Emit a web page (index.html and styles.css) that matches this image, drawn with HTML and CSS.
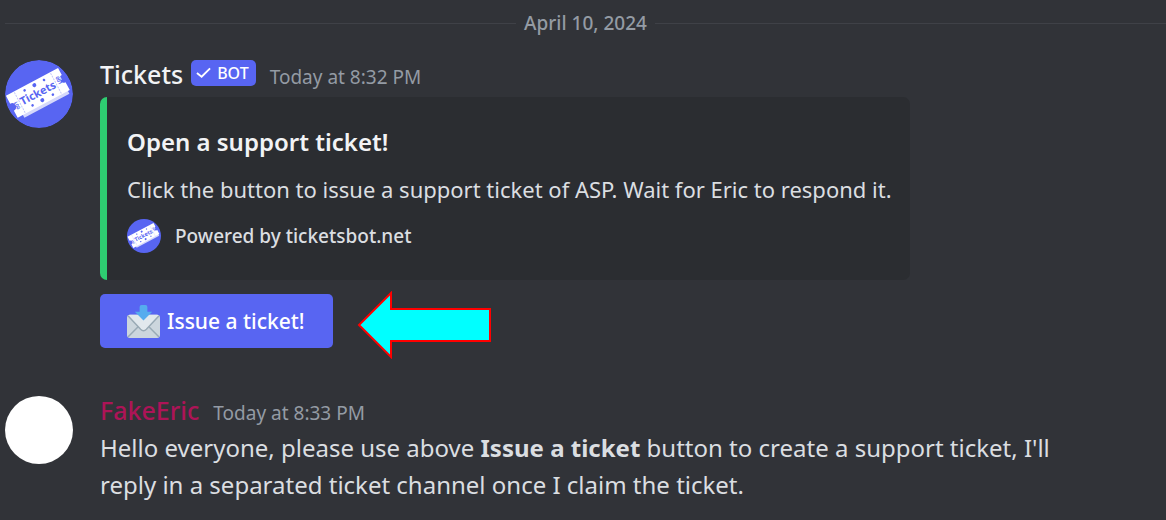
FILE: index.html
```html
<!DOCTYPE html>
<html lang="en">
<head>
<meta charset="utf-8">
<meta name="viewport" content="width=device-width, initial-scale=1">
<title>Support tickets</title>
<link rel="stylesheet" href="styles.css">
</head>
<body>
<svg class="defs" aria-hidden="true">
  <symbol id="ticket-logo" viewBox="0 0 68 68">
    <circle cx="34" cy="34" r="34" fill="#5865f2"/>
    <g transform="rotate(-28 34 34)">
      <path d="M10 26H61V32A3 3 0 0 0 61 38V48H10Z" fill="#d5d8fb"/>
      <path d="M4 20H63V28A4 4 0 0 0 63 36V45H4V37A4 4 0 0 0 4 29Z" fill="#fff"/>
      <path d="M13 21V44M54 21V44" stroke="#c3c8fa" stroke-dasharray="2 1"/>
      <g fill="#5865f2">
        <text x="33.500" y="36.500" text-anchor="middle" class="logo-word">Tickets</text>
        <text transform="translate(11 38) rotate(-90)" class="logo-num">001</text>
        <text transform="translate(56 27) rotate(90)" class="logo-num">001</text>
        <circle cx="23" cy="24" r="1.300"/><circle cx="34" cy="24" r="2"/><circle cx="45" cy="24" r="1.300"/>
        <circle cx="23" cy="41" r="1.300"/><circle cx="34" cy="41" r="2"/><circle cx="46" cy="41" r="1.300"/>
      </g>
    </g>
  </symbol>
</svg>
<main class="chat">
  <div class="divider"><time datetime="2024-04-10">April 10, 2024</time></div>

  <article class="message">
    <svg class="avatar" role="img" aria-label="Tickets avatar"><use href="#ticket-logo"/></svg>
    <div class="body">
      <header class="header">
        <span class="author">Tickets</span>
        <span class="badge"><svg class="check" viewBox="0 0 16 12" aria-hidden="true"><path d="M1 6L6 10L15 1"/></svg>BOT</span>
        <time class="stamp">Today at 8:32 PM</time>
      </header>
      <section class="embed">
        <h2 class="title">Open a support ticket!</h2>
        <p class="description">Click the button to issue a support ticket of ASP. Wait for Eric to respond it.</p>
        <footer class="footer"><svg class="footer-icon" aria-hidden="true"><use href="#ticket-logo"/></svg>Powered by ticketsbot.net</footer>
      </section>
      <div class="actions">
        <button class="issue" type="button">
          <svg class="mail" viewBox="0 0 34 34" aria-hidden="true">
            <rect x="0" y="10" width="34" height="24" rx="3" fill="#ccd6dd"/>
            <path d="M1 33L12 22M33 33L22 22" stroke="#99aab5" stroke-width="1.500"/>
            <path d="M1 11Q2 10 3 10H31Q32 10 33 11L20 25Q17 28 14 25Z" fill="#e1e8ed"/>
            <path d="M1 11L14 25Q17 28 20 25L33 11" fill="none" stroke="#99aab5" stroke-width="1.500"/>
            <path d="M13 2Q13 0 15 0H19Q21 0 21 2V7H26L17 16L8 7H13Z" fill="#55acee"/>
          </svg>
          Issue a ticket!
        </button>
        <svg class="arrow" viewBox="0 0 134 68" aria-hidden="true"><path d="M2 34L34 2V18H133V50H34V66Z"/></svg>
      </div>
    </div>
  </article>

  <article class="message">
    <div class="avatar blank"></div>
    <div class="body">
      <header class="header">
        <span class="author eric">FakeEric</span>
        <time class="stamp">Today at 8:33 PM</time>
      </header>
      <p class="text">Hello everyone, please use above <strong>Issue a ticket</strong> button to create a support ticket, I'll reply in a separated ticket channel once I claim the ticket.</p>
    </div>
  </article>
</main>
</body>
</html>
```
FILE: styles.css
```css
* { box-sizing: border-box; }
body {
  margin: 0;
  background: #313338;
  color: #dbdee1;
  font-family: "Noto Sans", sans-serif;
}
h2, p { margin: 0; }
.defs { position: absolute; width: 0; height: 0; }
.chat { padding: 10px 0 0 5px; }
.divider {
  display: flex;
  align-items: center;
  gap: 8px;
  margin-bottom: 22px;
  color: #949ba4;
  font-size: 19px;
  line-height: 26px;
  font-weight: 500;
}
.divider::before, .divider::after {
  content: "";
  flex: 1;
  height: 1px;
  background: #3f4147;
}
.message {
  display: flex;
  gap: 27px;
  padding-right: 80px;
  margin-bottom: 35px;
}
.avatar { flex: none; width: 68px; height: 68px; margin-top: 2px; border-radius: 50%; }
.blank { background: #fff; }
.logo-word { font: 700 11px "Noto Sans", sans-serif; }
.logo-num { font: 700 5px "Noto Sans", sans-serif; }
.body { flex: 1; min-width: 0; }
.header { display: flex; align-items: baseline; height: 35px; line-height: 32px; }
.author { color: #f2f3f5; font-size: 25px; font-weight: 500; }
.eric { color: #ad1457; }
.badge {
  display: flex;
  align-items: center;
  align-self: flex-start;
  gap: 6px;
  height: 26px;
  margin: 2px 0 0 8px;
  padding: 0 7px 0 5px;
  border-radius: 5px;
  background: #5865f2;
  color: #fff;
  font-size: 16px;
  font-weight: 500;
}
.check { width: 15px; height: 12px; fill: none; stroke: #fff; stroke-width: 2; }
.stamp { margin-left: 14px; color: #949ba4; font-size: 19px; }
.embed {
  width: fit-content;
  margin-top: 4px;
  padding: 27px 18px 27px 20px;
  border-left: 7px solid #2ecc71;
  border-radius: 7px;
  background: #2b2d31;
}
.title { color: #f2f3f5; font-size: 24px; line-height: 36px; font-weight: 600; }
.description { margin-top: 14px; font-size: 22px; line-height: 30px; }
.footer {
  display: flex;
  align-items: center;
  gap: 14px;
  margin-top: 15px;
  font-size: 19px;
  line-height: 34px;
  font-weight: 500;
}
.footer-icon { width: 34px; height: 34px; }
.actions { display: flex; align-items: flex-start; gap: 24px; margin-top: 11px; }
.issue {
  display: flex;
  align-items: center;
  gap: 7px;
  height: 54px;
  margin-top: 3px;
  padding: 0 28px 0 27px;
  border: 0;
  border-radius: 5px;
  background: #5865f2;
  color: #fff;
  font: 500 21px "Noto Sans", sans-serif;
}
.mail { width: 33px; height: 33px; }
.arrow { width: 134px; height: 68px; fill: #0ff; stroke: #f00; stroke-width: 2; }
.text { font-size: 24px; line-height: 37px; }
.text strong { font-weight: 700; }
```
